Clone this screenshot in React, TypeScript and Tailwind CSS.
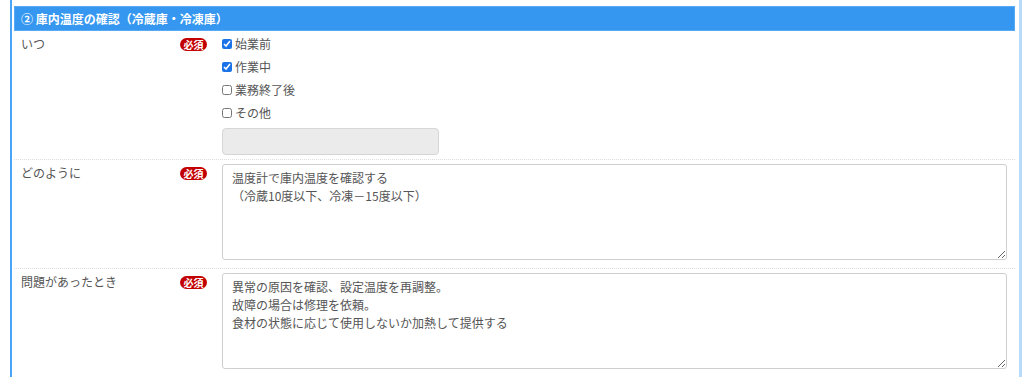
import { useState } from "react";

type Check = { label: string; checked: boolean };

const checks: Check[] = [
  { label: "始業前", checked: true },
  { label: "作業中", checked: true },
  { label: "業務終了後", checked: false },
  { label: "その他", checked: false },
];

function Required() {
  return (
    <span className="mt-[3px] flex h-[13px] w-[27px] items-center justify-center rounded-full bg-[#c20000] text-[10px] font-bold leading-none text-white">
      必須
    </span>
  );
}

function Row({
  label,
  children,
  last,
}: {
  label: string;
  children: React.ReactNode;
  last?: boolean;
}) {
  return (
    <div
      className={
        "flex pt-[4px] " +
        (last ? "pb-[8px]" : "border-b border-dotted border-[#dcdcdc]")
      }
    >
      <div className="flex w-[208px] shrink-0 items-start justify-between pl-[7px] pr-[15px]">
        <span className="leading-[18px]">{label}</span>
        <Required />
      </div>
      <div className="flex-1 pr-[8px]">{children}</div>
    </div>
  );
}

export default function App() {
  const [state, setState] = useState(checks.map((c) => c.checked));

  return (
    <div
      className="min-h-screen bg-white text-[12px] text-[#555]"
      style={{ fontFamily: '"Noto Sans CJK JP", "Noto Sans", sans-serif' }}
    >
      <div className="ml-[10px] w-[1012px] border-l-2 border-r-[3px] border-l-[#4aa5f8] border-r-[#b8dbfb] pl-[2px] pr-[4px] pt-[6px]">
        {/* Section header */}
        <div className="flex h-[25px] items-center border border-[#5aaaf3] bg-[#3597f0] pl-[6px] font-bold text-white">
          ② 庫内温度の確認（冷蔵庫・冷凍庫）
        </div>

        <Row label="いつ">
          <div className="flex flex-col gap-[5px]">
            {checks.map((c, i) => (
              <label key={c.label} className="flex h-[18px] items-center gap-[3px]">
                <input
                  type="checkbox"
                  checked={state[i]}
                  onChange={() =>
                    setState((s) => s.map((v, j) => (j === i ? !v : v)))
                  }
                  className="m-0 h-[10px] w-[10px] accent-[#1a73e8]"
                />
                <span className="leading-[18px]">{c.label}</span>
              </label>
            ))}
            <input
              disabled
              className="mt-[1px] h-[27px] w-[217px] rounded-[4px] border border-[#d6d6d6] bg-[#ebebeb]"
            />
          </div>
          <div className="h-[4px]" />
        </Row>

        <Row label="どのように">
          <textarea
            defaultValue={"温度計で庫内温度を確認する\n（冷蔵10度以下、冷凍－15度以下）"}
            className="mb-[8px] block h-[96px] w-full rounded-[3px] border border-[#cfcfcf] px-[9px] py-[4px] text-[12px] leading-[18px] text-[#555] outline-none"
          />
        </Row>

        <Row label="問題があったとき" last>
          <textarea
            defaultValue={
              "異常の原因を確認、設定温度を再調整。\n故障の場合は修理を依頼。\n食材の状態に応じて使用しないか加熱して提供する"
            }
            className="block h-[96px] w-full rounded-[3px] border border-[#cfcfcf] px-[9px] py-[4px] text-[12px] leading-[18px] text-[#555] outline-none"
          />
        </Row>
      </div>
    </div>
  );
}
